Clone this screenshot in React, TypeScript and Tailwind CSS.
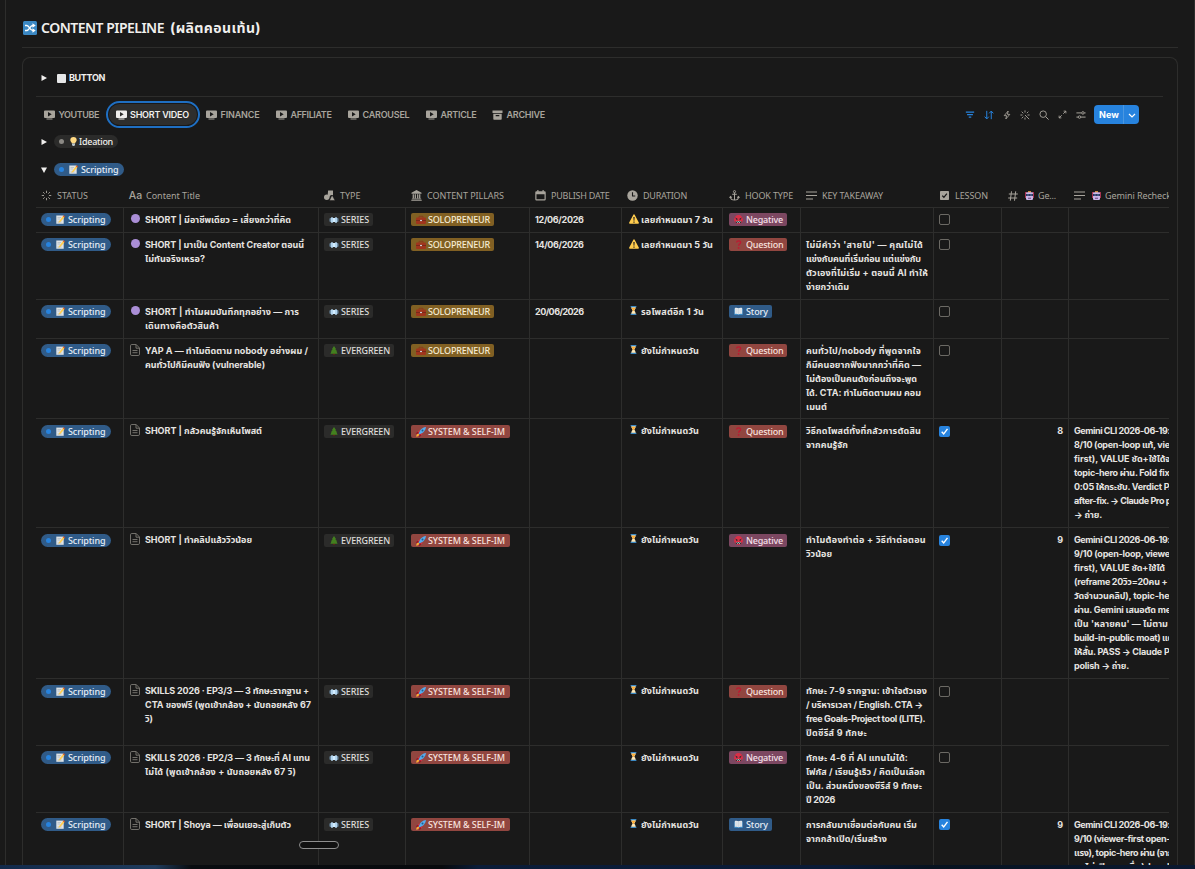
import { useLayoutEffect, useRef, type ReactNode } from "react";
import clsx from "clsx";

type Line = [text: string, width: number];

interface RowProps {
  height: string;
  dropped?: boolean;
  dotted?: boolean;
  title: Line[];
  kind: "SERIES" | "EVERGREEN";
  pillar: "SOLOPRENEUR" | "SYSTEM & SELF-IM";
  date?: string;
  duration: Line;
  late?: boolean;
  hook: "Negative" | "Question" | "Story";
  takeaway?: Line[];
  done?: boolean;
  score?: number;
  recheck?: Line[];
}

const graphemes = new Intl.Segmenter("th", { granularity: "grapheme" });

// Text set to a fixed measure by spreading the difference over its letters.
function Fit({ w, children, className }: { w: number; children: string; className?: string }) {
  const ref = useRef<HTMLSpanElement>(null);
  useLayoutEffect(() => {
    const el = ref.current;
    if (!el) return;
    el.style.letterSpacing = "0px";
    const count = [...graphemes.segment(children)].length;
    el.style.letterSpacing = `${(w - el.getBoundingClientRect().width) / count}px`;
  }, [w, children]);
  return (
    <span ref={ref} className={clsx("inline-block whitespace-pre", className)}>
      {children}
    </span>
  );
}

function Lines({ lines }: { lines: Line[] }) {
  return (
    <div className="flex flex-col items-start">
      {lines.map(([text, w], i) => (
        <Fit key={i} w={w} className="h-[14px]">
          {text}
        </Fit>
      ))}
    </div>
  );
}

function Svg({ children, className, box = "0 0 12 12" }: { children: ReactNode; className?: string; box?: string }) {
  return (
    <svg viewBox={box} className={clsx("shrink-0", className)} fill="none" aria-hidden="true">
      {children}
    </svg>
  );
}

function MemoIcon() {
  return (
    <Svg className="size-[9px]" box="0 0 9 9">
      <path d="M.3.600h7.400v8.200H.3z" fill="#dfe3e6" />
      <path d="M1.500 2.500h3.500M1.500 4h2.500M1.500 7h4" stroke="#a5b0b8" strokeWidth=".6" />
      <path d="M2.700 6.700 6.800 1.300l1.500 1.200-4 4.600-2 .7z" fill="#ffcc4d" />
      <path d="m6.800 1.300.8-1.100L9 1.400l-.7 1.100z" fill="#dd551f" />
    </Svg>
  );
}

function ShuffleIcon() {
  return (
    <Svg className="size-[14px]" box="0 0 14 14">
      <rect width="14" height="14" rx="1.500" fill="#3b88c3" />
      <path
        d="M2 4.500h1.800c2.600 0 3 5 6 5h1M2 9.500h1.800c2.600 0 3-5 6-5h1"
        stroke="#fff"
        strokeWidth="1.300"
      />
      <path d="m9.500 2.200 3.200 2.300-3.200 2.300zM9.500 7.200l3.200 2.300-3.200 2.300z" fill="#fff" />
    </Svg>
  );
}

function BulbIcon() {
  return (
    <Svg className="h-[9px] w-[7px]" box="0 0 7 9">
      <path d="M3.500 0C1.500 0 .3 1.300.3 3c0 1.600 1.300 2 1.600 3.500h3.200C5.400 5 6.700 4.600 6.700 3 6.700 1.300 5.500 0 3.500 0z" fill="#ffd983" />
      <path d="M2 6.500h3V8l-.8 1H2.800L2 8z" fill="#b8c5cd" />
    </Svg>
  );
}

function FilmIcon() {
  return (
    <Svg className="h-[6px] w-[10px]" box="0 0 10 6">
      <rect x=".5" y="1" width="9" height="4" rx="1" fill="#6f8da5" />
      <rect x="2" y=".3" width="2" height="5.400" rx=".5" fill="#b3d5ee" />
      <rect x="6" y=".3" width="2" height="5.400" rx=".5" fill="#b3d5ee" />
      <rect x="4" y="1" width="2" height="4" fill="#d3edff" />
    </Svg>
  );
}

function TreeIcon() {
  return (
    <Svg className="h-[9px] w-[8px]" box="0 0 8 9">
      <path d="M3.200 7h1.600v2H3.200z" fill="#662113" />
      <path d="m4 0 2 3H5.300L7 5.300h-.5L7.600 7.800H.4l1.100-2.500H1L2.700 3H2z" fill="#43801f" />
    </Svg>
  );
}

function CaseIcon() {
  return (
    <Svg className="size-[10px]" box="0 0 10 10">
      <path d="M3 3V1.300h4V3" stroke="#8a3a1e" strokeWidth=".9" />
      <rect y="2.500" width="10" height="6.500" rx="1" fill="#a0351d" />
      <path d="M0 5.500h10" stroke="#6d281b" strokeWidth=".8" />
      <rect x="4" y="4.900" width="2" height="1.200" fill="#c7ced3" />
    </Svg>
  );
}

function RocketIcon() {
  return (
    <Svg className="size-[10px]" box="0 0 10 10">
      <path d="m2 5-1.500.8L0 7l3-1zM5 8l-.8 1.500L3 10l1-3z" fill="#a0041e" />
      <path d="M2.500 7.500C3.500 3 6 .7 10 0c-.7 4-3 6.500-7.500 7.500z" fill="#55acee" />
      <circle cx="6.500" cy="3.500" r="1" fill="#22618e" />
      <path d="M2 4.300 4 3 2.500 6zM5.700 8 7 6 4 7.500z" fill="#dd2e44" />
      <path d="M.2 9.800C.3 8 1 6.700 2.300 6.800s1 1.500-.3 2.400z" fill="#ffac33" />
    </Svg>
  );
}

function WarningIcon() {
  return (
    <Svg className="size-[10px]" box="0 0 10 10">
      <path d="M5 .3c.4 0 .6.200.8.6l4 7.500c.3.700 0 1.300-.7 1.300H.9c-.7 0-1-.6-.7-1.300l4-7.500c.2-.4.4-.6.8-.6z" fill="#ffcc4d" />
      <path d="M4.300 3h1.400l-.3 3.700h-.8zM4.400 7.500h1.200v1.200H4.400z" fill="#231f20" />
    </Svg>
  );
}

function HourglassIcon() {
  return (
    <Svg className="h-[9px] w-[7px]" box="0 0 7 10">
      <path d="M1 1h5c0 2.500-1.500 3-1.500 4S6 6.500 6 9H1c0-2.500 1.500-3 1.500-4S1 3.500 1 1z" fill="#ffe8b6" />
      <path d="M1.300 2h4.400C5.300 3.800 4 4 4 5.500H3C3 4 1.700 3.800 1.300 2z" fill="#ffac33" />
      <path d="M.3 0h6.400v1.500H.3zM.3 8.500h6.400V10H.3z" fill="#3b88c3" />
    </Svg>
  );
}

function AngryIcon() {
  return (
    <Svg className="size-[9px]" box="0 0 9 9">
      <circle cx="4.500" cy="4.500" r="4.400" fill="#da2f47" />
      <path d="m1.500 3 2 1M7.500 3l-2 1" stroke="#292f33" strokeWidth=".8" />
      <circle cx="2.800" cy="4.300" r=".6" fill="#292f33" />
      <circle cx="6.200" cy="4.300" r=".6" fill="#292f33" />
      <path d="M1.800 6h5.400v2H1.800z" fill="#292f33" />
      <path d="M2.500 6.300h.8v.8h-.8zM4.100 6.300h.8v.8h-.8zM5.700 6.300h.8v.8h-.8zM3.300 7.200h.8V8h-.8zM5 7.200h.8V8H5z" fill="#fff" />
    </Svg>
  );
}

function QuestionIcon() {
  return (
    <Svg className="size-[9px]" box="0 0 9 9">
      <path d="M2.500 2.500C2.700 1.300 3.500.8 4.600.8c1.200 0 2 .7 2 1.700 0 1.500-2 1.600-2 3.300" stroke="#be1931" strokeWidth="1.300" />
      <circle cx="4.600" cy="7.900" r=".9" fill="#be1931" />
    </Svg>
  );
}

function BookIcon() {
  return (
    <Svg className="size-[9px]" box="0 0 9 9">
      <path d="M.3 2h8.400v6H.3z" fill="#3b88c3" />
      <path d="M.8 1c1.200-.6 2.700-.4 3.700.3C5.500.6 7 .4 8.200 1v6c-1.200-.5-2.700-.4-3.700.3-1-.7-2.500-.8-3.700-.3z" fill="#e1e8ed" />
      <path d="M4.500 1.300v6M1.500 3h2M5.500 3h2M1.500 5h2M5.500 5h2" stroke="#bccad4" strokeWidth=".5" />
    </Svg>
  );
}

function RobotIcon() {
  return (
    <Svg className="size-[9px]" box="0 0 9 9">
      <path d="M0 1h2v6H0zM7 1h2v6H7z" fill="#a6334f" />
      <path d="M3 0h3v2H3z" fill="#c98a3c" />
      <rect x="1" y="1.300" width="7" height="7.700" rx="1.300" fill="#c9b5e6" />
      <path d="M1 3h7v2H1z" fill="#30365c" />
      <path d="M2.500 3.500h1v1h-1zM5.500 3.500h1v1h-1z" fill="#76b6ee" />
      <path d="M3 6.800h3v1H3z" fill="#65467d" />
    </Svg>
  );
}

function TabIcon() {
  return (
    <Svg className="h-[10px] w-[11px]" box="0 0 11 10">
      <path d="M1 .5h9a1 1 0 0 1 1 1V7a1 1 0 0 1-1 1H1a1 1 0 0 1-1-1V1.500a1 1 0 0 1 1-1zM4 2v4.500l3.700-2.250z" fill="currentColor" fillRule="evenodd" />
      <path d="M2.500 9h6" stroke="currentColor" strokeWidth="1" />
    </Svg>
  );
}

function ArchiveIcon() {
  return (
    <Svg className="h-[10px] w-[11px]" box="0 0 11 10">
      <path d="M.5.500h10V3H.5zM1.300 3.800h8.400V9a.7.7 0 0 1-.7.700H2a.7.7 0 0 1-.7-.7zM3.700 5v1.200h3.600V5z" fill="currentColor" fillRule="evenodd" />
    </Svg>
  );
}

function PageIcon() {
  return (
    <Svg className="h-[12px] w-[10px]" box="0 0 10 12">
      <path d="M1.800.5h4.400L9.500 4v6.200a1.300 1.300 0 0 1-1.300 1.300H1.800A1.300 1.300 0 0 1 .5 10.200V1.800A1.300 1.300 0 0 1 1.800.5zM6 .7v3.500h3.300M2.500 6.500h5M2.500 8.700h5" stroke="#7d7a75" strokeWidth=".9" />
    </Svg>
  );
}

function LinesIcon() {
  return (
    <Svg className="h-[9px] w-[11px]" box="0 0 11 9">
      <path d="M0 1h11M0 4.500h11M0 8h7" stroke="currentColor" strokeWidth="1.100" />
    </Svg>
  );
}

function Check({ on }: { on?: boolean }) {
  if (!on) return <div className="size-[11px] rounded-[2px] border border-[#6b6964]" />;
  return (
    <div className="size-[11px] rounded-[2px] bg-[#2783de]">
      <Svg className="size-[11px]" box="0 0 11 11">
        <path d="m2.700 5.700 2 2.200 3.800-5" stroke="#fff" strokeWidth="1.400" />
      </Svg>
    </div>
  );
}

function StatusPill() {
  return (
    <div className="flex h-[13px] w-[70px] items-center rounded-full bg-[#305b88] pl-[5px] text-[#e6eef6]">
      <span className="size-[5px] rounded-full bg-[#2783de]" />
      <span className="ml-[5px] flex">
        <MemoIcon />
      </span>
      <Fit w={37.5} className="ml-[3px] font-['Noto_Sans',sans-serif] text-[9px] leading-[13px] font-medium">
        Scripting
      </Fit>
    </div>
  );
}

const tags = {
  SERIES: { box: "w-[49px] bg-[#2b2b2a] text-[#dedcd9]", icon: <FilmIcon />, w: 28 },
  EVERGREEN: { box: "w-[70px] bg-[#2b2b2a] text-[#dedcd9]", icon: <TreeIcon />, w: 49 },
  SOLOPRENEUR: { box: "w-[83px] bg-[#816023] text-[#f6ecd4]", icon: <CaseIcon />, w: 62 },
  "SYSTEM & SELF-IM": { box: "w-[99px] bg-[#914640] text-[#f8e2df]", icon: <RocketIcon />, w: 77 },
  Negative: { box: "w-[58px] bg-[#7c4761] text-[#f5e0ea]", icon: <AngryIcon />, w: 37 },
  Question: { box: "w-[58px] bg-[#914640] text-[#f8e2df]", icon: <QuestionIcon />, w: 37.5 },
  Story: { box: "w-[43px] bg-[#305b88] text-[#e6eef6]", icon: <BookIcon />, w: 22 },
};

function Tag({ name }: { name: keyof typeof tags }) {
  const { box, icon, w } = tags[name];
  return (
    <div className={clsx("flex h-[13px] items-center rounded-[2px] pl-[4px]", box)}>
      <span className="flex w-[13px] justify-center pr-[2px]">{icon}</span>
      <Fit w={w} className="font-['Noto_Sans',sans-serif] text-[9px] leading-[13px] font-medium">
        {name}
      </Fit>
    </div>
  );
}

const rows: RowProps[] = [
  {
    height: "h-[25px]", dotted: true, title: [["SHORT | มีอาชีพเดียว = เสี่ยงกว่าที่คิด", 146]],
    kind: "SERIES", pillar: "SOLOPRENEUR", date: "12/06/2026",
    duration: ["เลยกำหนดมา 7 วัน", 72], late: true, hook: "Negative",
  },
  {
    height: "h-[67px]", dotted: true,
    title: [["SHORT | มาเป็น Content Creator ตอนนี้", 159], ["ไม่ทันจริงเหรอ?", 60]],
    kind: "SERIES", pillar: "SOLOPRENEUR", date: "14/06/2026",
    duration: ["เลยกำหนดมา 5 วัน", 72], late: true, hook: "Question",
    takeaway: [["ไม่มีคำว่า 'สายไป' — คุณไม่ได้", 117], ["แข่งกับคนที่เริ่มก่อน แต่แข่งกับ", 115], ["ตัวเองที่ไม่เริ่ม + ตอนนี้ AI ทำให้", 122], ["ง่ายกว่าเดิม", 43]],
  },
  {
    height: "h-[39px]", dotted: true,
    title: [["SHORT | ทำไมผมบันทึกทุกอย่าง — การ", 154], ["เดินทางคือตัวสินค้า", 74]],
    kind: "SERIES", pillar: "SOLOPRENEUR", date: "20/06/2026",
    duration: ["รอโพสต์อีก 1 วัน", 63], hook: "Story",
  },
  {
    height: "h-[80px]",
    title: [["YAP A — ทำไมติดตาม nobody อย่างผม /", 163], ["คนทั่วไปก็มีคนฟัง (vulnerable)", 120]],
    kind: "EVERGREEN", pillar: "SOLOPRENEUR", duration: ["ยังไม่กำหนดวัน", 58], hook: "Question",
    takeaway: [["คนทั่วไป/nobody ที่พูดจากใจ", 115], ["ก็มีคนอยากฟังมากกว่าที่คิด —", 115], ["ไม่ต้องเป็นคนดังก่อนถึงจะพูด", 111], ["ได้. CTA: ทำไมติดตามผม คอม", 115], ["เมนต์", 21]],
  },
  {
    height: "h-[109px]", dropped: true, title: [["SHORT | กลัวคนรู้จักเห็นโพสต์", 117]],
    kind: "EVERGREEN", pillar: "SYSTEM & SELF-IM", duration: ["ยังไม่กำหนดวัน", 58], hook: "Question",
    takeaway: [["วิธีกดโพสต์ทั้งที่กลัวการตัดสิน", 115], ["จากคนรู้จัก", 42]], done: true, score: 8,
    recheck: [["Gemini CLI 2026-06-19:", 96], ["8/10 (open-loop แท้, view", 103], ["first), VALUE ชัด+ใช้ได้จริง", 106], ["topic-hero ผ่าน. Fold fix", 95.5], ["0:05 ให้กระชับ. Verdict PA", 101], ["after-fix. → Claude Pro p", 97], ["→ ถ่าย.", 28]],
  },
  {
    height: "h-[151px]", dropped: true, title: [["SHORT | ทำคลิปแล้ววิวน้อย", 107]],
    kind: "EVERGREEN", pillar: "SYSTEM & SELF-IM", duration: ["ยังไม่กำหนดวัน", 58], hook: "Negative",
    takeaway: [["ทำไมต้องทำต่อ + วิธีทำต่อตอน", 120], ["วิวน้อย", 26]], done: true, score: 9,
    recheck: [["Gemini CLI 2026-06-19:", 96], ["9/10 (open-loop, viewer-", 103], ["first), VALUE ชัด+ใช้ได้", 91], ["(reframe 20วิว=20คน + ไ", 98], ["วัดจำนวนคลิป), topic-her", 99], ["ผ่าน. Gemini เสนอตัด met", 100], ["เป็น 'หลายคน' — ไม่ตาม", 94], ["build-in-public moat) แต", 99], ["ให้สั้น. PASS → Claude Pr", 99], ["polish → ถ่าย.", 55]],
  },
  {
    height: "h-[67px]", dropped: true,
    title: [["SKILLS 2026 · EP3/3 — 3 ทักษะรากฐาน +", 164], ["CTA ของฟรี (พูดเข้ากล้อง + นับถอยหลัง 67", 166], ["วิ)", 8]],
    kind: "SERIES", pillar: "SYSTEM & SELF-IM", duration: ["ยังไม่กำหนดวัน", 58], hook: "Question",
    takeaway: [["ทักษะ 7-9 รากฐาน: เข้าใจตัวเอง", 121], ["/ บริหารเวลา / English. CTA →", 117], ["free Goals-Project tool (LITE).", 119], ["ปิดซีรีส์ 9 ทักษะ", 61]],
  },
  {
    height: "h-[67px]",
    title: [["SKILLS 2026 · EP2/3 — 3 ทักษะที่ AI แทน", 165], ["ไม่ได้ (พูดเข้ากล้อง + นับถอยหลัง 67 วิ)", 151]],
    kind: "SERIES", pillar: "SYSTEM & SELF-IM", duration: ["ยังไม่กำหนดวัน", 58], hook: "Negative",
    takeaway: [["ทักษะ 4-6 ที่ AI แทนไม่ได้:", 102], ["โฟกัส / เรียนรู้เร็ว / คิดเป็นเลือก", 119], ["เป็น. ส่วนหนึ่งของซีรีส์ 9 ทักษะ", 116], ["ปี 2026", 29]],
  },
  {
    height: "h-[67px]", title: [["SHORT | Shoya — เพื่อนเยอะสู่เก็บตัว", 146]],
    kind: "SERIES", pillar: "SYSTEM & SELF-IM", duration: ["ยังไม่กำหนดวัน", 58], hook: "Story",
    takeaway: [["การกลับมาเชื่อมต่อกับคน เริ่ม", 111], ["จากกล้าเปิด/เริ่มสร้าง", 81]], done: true, score: 9,
    recheck: [["Gemini CLI 2026-06-19:", 96], ["9/10 (viewer-first open-", 96], ["แรง), topic-hero ผ่าน (จาก", 99], ["มาไม่เปิดเผยชื่อ) hook", 99]],
  },
];

const columns =
  "grid grid-cols-[88px_195px_87px_124px_92px_101px_78px_133px_68px_67px_100px]";

function Cell({ children, className }: { children?: ReactNode; className?: string }) {
  return (
    <div className={clsx("min-w-0 overflow-hidden border-r border-b border-[#2d2d2c] pl-[5px] last:border-r-0", className)}>
      {children}
    </div>
  );
}

function Row(row: RowProps) {
  const chip = row.dropped ? "pt-[6px]" : "pt-[5px]";
  return (
    <div className={clsx(columns, row.height, "text-[9px] leading-[14px] font-bold text-[#e6e4e1]")}>
      <Cell className={chip}>
        <StatusPill />
      </Cell>
      <Cell className="flex gap-[4px] pt-[5px] pl-[6px]">
        {row.dotted ? (
          <span className="mt-[1px] mr-[1px] ml-[1px] size-[9px] shrink-0 rounded-full bg-[#aa8ed6]" />
        ) : (
          <span className="flex w-[11px] shrink-0">
            <PageIcon />
          </span>
        )}
        <Lines lines={row.title} />
      </Cell>
      <Cell className={chip}>
        <Tag name={row.kind} />
      </Cell>
      <Cell className={chip}>
        <Tag name={row.pillar} />
      </Cell>
      <Cell className="pt-[5px]">{row.date && <Fit w={48.5}>{row.date}</Fit>}</Cell>
      <Cell className="flex gap-[2px] pt-[5px] pl-[6px]">
        <span className="flex w-[11px] shrink-0 justify-center pt-[1px]">
          {row.late ? <WarningIcon /> : <HourglassIcon />}
        </span>
        <Lines lines={[row.duration]} />
      </Cell>
      <Cell className={clsx(chip, "pl-[6px]")}>
        <Tag name={row.hook} />
      </Cell>
      <Cell className="pt-[5px]">{row.takeaway && <Lines lines={row.takeaway} />}</Cell>
      <Cell className={row.dropped ? "pt-[7px]" : "pt-[6px]"}>
        <Check on={row.done} />
      </Cell>
      <Cell className="pt-[5px] pr-[5px] text-right">{row.score}</Cell>
      <Cell className="pt-[5px]">{row.recheck && <Lines lines={row.recheck} />}</Cell>
    </div>
  );
}

function Heading({ icon, label, w, className, mark }: { icon: ReactNode; label: string; w: number; className?: string; mark?: ReactNode }) {
  return (
    <div className={clsx("flex items-center overflow-hidden pl-[5px]", className)}>
      <span className="flex w-[11px] shrink-0 justify-center">{icon}</span>
      {mark && <span className="ml-[7px] flex">{mark}</span>}
      <Fit w={w} className={mark ? "ml-[4px]" : "ml-[5px]"}>
        {label}
      </Fit>
    </div>
  );
}

function TableHead() {
  return (
    <div className={clsx(columns, "h-[26px] border-b border-[#2d2d2c] pt-[2px] font-['Noto_Sans',sans-serif] text-[9px] leading-[14px] text-[#a8a49c]")}>
      <Heading
        label="STATUS"
        w={31}
        icon={
          <Svg className="size-[11px]">
            <path d="M6 .8v2.500M6 8.700v2.500M.8 6h2.500M8.700 6h2.500M2.300 2.300l1.700 1.700M8 8l1.700 1.700M9.700 2.300 8 4M4 8 2.300 9.700" stroke="currentColor" strokeWidth="1" />
          </Svg>
        }
      />
      <Heading label="Content Title" w={54} className="pl-[6px]" icon={<span className="font-['Inter'] text-[10.500px] font-medium">Aa</span>} />
      <Heading
        label="TYPE"
        w={20.5}
        icon={
          <Svg className="size-[11px]">
            <path d="M4.500.5h5.300v5H7.500L5.500 8 4 5.500z" fill="currentColor" />
            <circle cx="3" cy="8" r="3" fill="currentColor" />
            <path d="m8.800 5.500 3.200 6H6z" fill="currentColor" stroke="#191919" strokeWidth=".5" />
          </Svg>
        }
      />
      <Heading
        label="CONTENT PILLARS"
        w={77}
        icon={
          <Svg className="size-[11px]">
            <path d="M6 0 .5 3v1h11V3zM1.800 4.500h1.400V9H1.800zM4 4.500h1.400V9H4zM6.600 4.500H8V9H6.600zM8.800 4.500h1.400V9H8.800zM1 9.400h10v.8H1zM.3 10.600h11.400v1.200H.3z" fill="currentColor" />
          </Svg>
        }
      />
      <Heading
        label="PUBLISH DATE"
        w={58.5}
        icon={
          <Svg className="size-[11px]">
            <path d="M2.500 0h1.300v1.300h4.400V0h1.300v1.300h1A1.300 1.300 0 0 1 11.700 2.600v7.600a1.300 1.300 0 0 1-1.300 1.300H1.600A1.300 1.300 0 0 1 .3 10.200V2.600a1.300 1.300 0 0 1 1.300-1.300h.9zM1.600 4.500v5.600h8.800V4.500z" fill="currentColor" fillRule="evenodd" />
          </Svg>
        }
      />
      <Heading
        label="DURATION"
        w={44}
        icon={
          <Svg className="size-[11px]">
            <circle cx="6" cy="6" r="5.700" fill="currentColor" />
            <path d="M6 2.500V6.500h3" stroke="#191919" strokeWidth="1.200" />
          </Svg>
        }
      />
      <Heading
        label="HOOK TYPE"
        w={48}
        className="pl-[6px]"
        icon={
          <Svg className="size-[11px]">
            <circle cx="6" cy="1.800" r="1.200" stroke="currentColor" strokeWidth="1" />
            <path d="M6 3v8M3.500 4.700h5M1.500 7.300c.2 2.700 2 3.700 4.500 3.700s4.300-1 4.500-3.700M.5 8.500l1.200-1.500 1.300 1.300M11.500 8.500l-1.200-1.500L9 8.300" stroke="currentColor" strokeWidth="1.100" />
          </Svg>
        }
      />
      <Heading label="KEY TAKEAWAY" w={61} icon={<LinesIcon />} />
      <Heading
        label="LESSON"
        w={33}
        icon={
          <Svg className="size-[9px]" box="0 0 9 9">
            <rect width="9" height="9" rx=".8" fill="currentColor" />
            <path d="m2.200 4.600 1.700 1.700 3-3.600" stroke="#191919" strokeWidth="1.300" />
          </Svg>
        }
      />
      <Heading
        label="Ge..."
        w={18}
        mark={<RobotIcon />}
        icon={
          <Svg className="size-[10px]" box="0 0 10 10">
            <path d="M3.500.3 2.300 9.700M7.700.3 6.500 9.700M.8 3h9M.2 7h9" stroke="currentColor" strokeWidth="1" />
          </Svg>
        }
      />
      <Heading label="Gemini Recheck" w={66} mark={<RobotIcon />} icon={<LinesIcon />} />
    </div>
  );
}

function Tab({ label, w, className, icon = <TabIcon /> }: { label: string; w: number; className?: string; icon?: ReactNode }) {
  return (
    <div className={clsx("flex items-center gap-[3.500px]", className)}>
      {icon}
      <Fit w={w} className="pt-[1px]">
        {label}
      </Fit>
    </div>
  );
}

function Toolbar() {
  return (
    <div className="flex h-[27px] items-center pl-[8px] text-[9px] font-semibold text-[#a8a49c]">
      <Tab label="YOUTUBE" w={40.5} className="w-[61.500px]" />
      <div className="h-[27px] w-[94px] rounded-full border-2 border-[#1f6fc2] p-[1px]">
        <Tab label="SHORT VIDEO" w={59} className="h-full rounded-full bg-[#2e2e2d] pl-[7px] text-[#f0efed]" />
      </div>
      <Tab label="FINANCE" w={39} className="ml-[6.500px] w-[70px]" />
      <Tab label="AFFILIATE" w={41} className="w-[72px]" />
      <Tab label="CAROUSEL" w={47} className="w-[78px]" />
      <Tab label="ARTICLE" w={36} className="w-[66px]" />
      <Tab label="ARCHIVE" w={38.5} icon={<ArchiveIcon />} />
      <div className="mr-[8px] ml-auto flex items-center gap-[9px]">
        <Svg className="h-[10px] w-[10px] text-[#2783de]">
          <path d="M1 2.500h10M2.500 5.500h7M4.500 8.500h3" stroke="currentColor" strokeWidth="1.300" />
        </Svg>
        <Svg className="size-[10px] text-[#2783de]">
          <path d="M3.300 1v9.500M.8 8l2.500 2.700L5.800 8M8.700 11V1.500M6.200 4l2.500-2.700L11.200 4" stroke="currentColor" strokeWidth="1.200" />
        </Svg>
        <Svg className="h-[10px] w-[8px]" box="0 0 10 12">
          <path d="M6.500 1 1.500 6.800h3L3.500 11l5-5.800h-3z" stroke="currentColor" strokeWidth="1.100" />
        </Svg>
        <Svg className="size-[10px]">
          <path d="M6 .5v2.500M.5 6H3M9 6h2.500M6 9v2.500M2 2l2 2M10 2 8.200 3.800M4 8l-2 2M6 6l5 5" stroke="currentColor" strokeWidth="1.100" />
        </Svg>
        <Svg className="size-[10px]">
          <circle cx="5" cy="5" r="3.900" stroke="currentColor" strokeWidth="1.100" />
          <path d="m8 8 3.500 3.500" stroke="currentColor" strokeWidth="1.200" />
        </Svg>
        <Svg className="size-[9px]">
          <path d="M7.500 1.500h3v3M4.500 10.500h-3v-3M10.500 1.500 7 5M1.500 10.500 5 7" stroke="currentColor" strokeWidth="1.200" />
        </Svg>
        <Svg className="size-[10px]">
          <path d="M.5 3.500h6M10 3.500h1.500M.5 8.500h2M6 8.500h5.500" stroke="currentColor" strokeWidth="1.200" />
          <circle cx="8.300" cy="3.500" r="1.500" stroke="currentColor" strokeWidth="1.100" />
          <circle cx="4.200" cy="8.500" r="1.500" stroke="currentColor" strokeWidth="1.100" />
        </Svg>
      </div>
      <div className="mr-[30px] flex h-[19px] w-[45px] items-center rounded-[4px] bg-[#2783de] pl-[5px] text-white">
        <Fit w={20} className="font-bold">
          New
        </Fit>
        <span className="ml-auto flex h-full w-[16px] items-center justify-center border-l border-[#4b97e0]">
          <Svg className="size-[8px]" box="0 0 8 8">
            <path d="m1 3 3 3 3-3" stroke="currentColor" strokeWidth="1.200" />
          </Svg>
        </span>
      </div>
    </div>
  );
}

function Caret({ open }: { open?: boolean }) {
  return (
    <Svg className="size-[6px] text-[#f0efed]" box="0 0 6 6">
      <path d={open ? "M0 .5h6L3 6z" : "M.5 0v6L6 3z"} fill="currentColor" />
    </Svg>
  );
}

export default function App() {
  return (
    <div className="relative flex h-[869px] w-[1195px] flex-col overflow-hidden bg-[#191919] font-['Inter','Noto_Sans_Thai','Noto_Sans',sans-serif] text-[#f0efed]">
      <main className="ml-[5px] flex min-h-0 flex-1 flex-col border-x border-[#2d2d2c] pr-[16px] pl-[16px]">
        <h1 className="flex h-[48px] shrink-0 items-center border-b border-[#2d2d2c] pt-[9px] text-[14px] leading-[20px] font-medium">
          <span className="mr-[4px] ml-[1px]">
            <ShuffleIcon />
          </span>
          <Fit w={123} className="font-['Noto_Sans',sans-serif] font-semibold">
            CONTENT PIPELINE
          </Fit>
          <Fit w={91} className="ml-[6px] font-bold">
            (ผลิตคอนเท้น)
          </Fit>
        </h1>

        <section className="mt-[9px] min-h-0 flex-1 overflow-hidden rounded-t-[8px] border border-b-0 border-[#2d2d2c] pt-[14px] pr-[8px] pl-[13px]">
          <div className="mr-[6px] flex h-[25px] items-start border-b border-[#2d2d2c] pl-[5px]">
            <div className="flex h-[12px] items-center text-[9px] font-bold">
              <Caret />
              <span className="ml-[10px] size-[9px] rounded-[1px] bg-[#e6e7e8]" />
              <Fit w={36} className="ml-[3px]">
                BUTTON
              </Fit>
            </div>
          </div>

          <div className="mt-[4px]">
            <Toolbar />
          </div>

          <div className="mt-[7px] flex h-[13px] items-center pl-[5px]">
            <Caret />
            <div className="ml-[7px] flex h-[13px] w-[64px] items-center rounded-full bg-[#2b2b2a] pl-[5px]">
              <span className="size-[5px] rounded-full bg-[#8b8984]" />
              <span className="ml-[6px] flex">
                <BulbIcon />
              </span>
              <Fit w={34} className="ml-[2px] font-['Noto_Sans',sans-serif] text-[9px] leading-[13px] font-medium">
                Ideation
              </Fit>
            </div>
          </div>

          <div className="mt-[15px] flex h-[13px] items-center pl-[5px]">
            <Caret open />
            <span className="ml-[7px]">
              <StatusPill />
            </span>
          </div>

          <div className="mt-[6px] w-[1133px]">
            <TableHead />
            {rows.map((row, i) => (
              <Row key={i} {...row} />
            ))}
          </div>
        </section>
      </main>

      <div className="absolute top-[841px] left-[299px] h-[8px] w-[40px] rounded-full border border-[#8f8f8f] bg-[#111111]" />
      <div className="h-[4px] shrink-0 bg-[linear-gradient(90deg,#12294a_0%,#1f3b5c_13%,#090c10_16%,#080a0d_37%,#0b1c38_40%,#0a1a35_70%,#07121f_78%,#0a1830_100%)]" />
    </div>
  );
}
